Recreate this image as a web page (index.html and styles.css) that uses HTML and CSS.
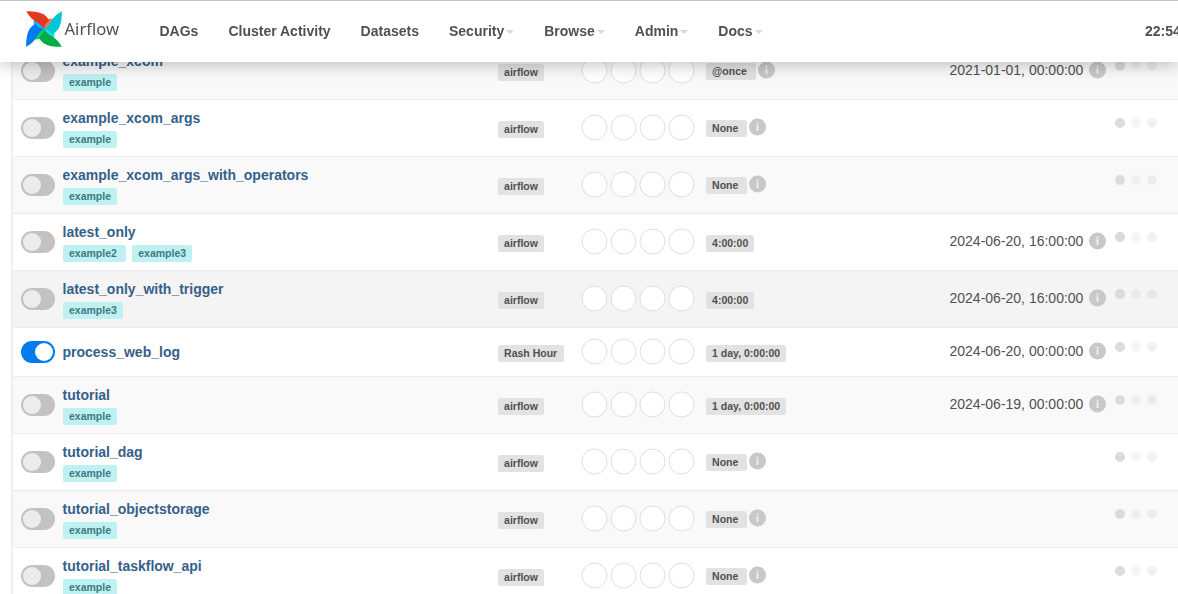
FILE: index.html
```html
<!DOCTYPE html>
<html lang="en">
<head>
<meta charset="utf-8">
<title>DAGs - Airflow</title>
<link rel="stylesheet" href="styles.css">
</head>
<body>
<header class="navbar">
  <a class="brand">
    <svg class="brand-mark" viewBox="0 0 36 36" width="36" height="36">
      <defs>
        <path id="blade" d="M18 18Q15 13 9.500 10.500Q4 7 0.300 0.200C6 0 13.500 0.800 18 3.600Q21.500 6 23.200 9.500Q19 12.500 18 18Z"/>
        <path id="fold" d="M18 18Q15 12 21 8L26.500 7.500Q25.500 13 21 18Z"/>
      </defs>
      <use href="#fold" fill="#ff7557"/>
      <use href="#fold" fill="#11e1ee" transform="rotate(90 18 18)"/>
      <use href="#fold" fill="#04d659" transform="rotate(180 18 18)"/>
      <use href="#fold" fill="#0cb6ff" transform="rotate(270 18 18)"/>
      <use href="#blade" fill="#e43921"/>
      <use href="#blade" fill="#00c7d4" transform="rotate(90 18 18)"/>
      <use href="#blade" fill="#00ad46" transform="rotate(180 18 18)"/>
      <use href="#blade" fill="#017cee" transform="rotate(270 18 18)"/>
    </svg>
    <span class="brand-name">Airflow</span>
  </a>
  <nav class="menu">
    <a>DAGs</a>
    <a>Cluster Activity</a>
    <a>Datasets</a>
    <a>Security<i class="caret"></i></a>
    <a>Browse<i class="caret"></i></a>
    <a>Admin<i class="caret"></i></a>
    <a>Docs<i class="caret"></i></a>
  </nav>
  <span class="clock">22:54</span>
</header>
<main class="dags" id="dags"></main>
<script src="dags.js"></script>
</body>
</html>
```
FILE: styles.css
```css
* { box-sizing: border-box; }
body {
  margin: 0;
  height: 594px;
  overflow: hidden;
  background: #fff;
  color: #51504f;
  font: 14px/20px "Liberation Sans", Arial, sans-serif;
}
.navbar {
  position: fixed;
  inset: 0 0 auto;
  z-index: 2;
  display: flex;
  align-items: center;
  height: 62px;
  padding-bottom: 2px;
  border-top: 1px solid #c4c4c4;
  background: #fff;
  box-shadow: 0 3px 16px rgba(0, 0, 0, 0.24);
}
.brand {
  display: flex;
  width: 133.500px;
  padding-left: 26px;
  padding-bottom: 4px;
}
.brand-mark { flex: none; }
.brand-name {
  padding: 7px 0 0 2.500px;
  font: 16.600px/22px "Noto Sans", sans-serif;
}
.menu {
  display: flex;
  flex: 1;
  gap: 30px;
  padding-left: 26px;
  font-weight: bold;
  white-space: nowrap;
}
.caret {
  display: inline-block;
  margin-left: 2px;
  vertical-align: 2px;
  border: 4px solid transparent;
  border-top-color: #e2d2e2;
  border-bottom: 0;
}
.clock {
  flex: none;
  width: 33px;
  font-weight: bold;
}
.dags {
  margin-left: 11px;
  padding-top: 42px;
  border-left: 2px solid #efefef;
}
.dag {
  display: grid;
  grid-template-columns: 49.500px 435.500px 83px 125px 243.500px 165.500px 1fr;
  align-items: center;
  height: 57px;
  border-top: 1px solid #ececec;
}
.dag.untagged { height: 49px; }
.dag:nth-child(odd) { background: #f9f9f9; }
.dag.untagged { background: #fff; }
.dag.hovered { background: #f4f4f4; }
.toggle {
  width: 34px;
  height: 22px;
  margin-left: 8px;
  padding: 2px;
  border-radius: 11px;
  background: #c4c2c1;
}
.toggle::before {
  content: "";
  display: block;
  width: 18px;
  height: 18px;
  border-radius: 50%;
  background: #edecec;
}
.toggle.on { background: #017cee; }
.toggle.on::before { margin-left: 12px; background: #fff; }
.name {
  display: block;
  color: #365f8b;
  font-weight: bold;
}
.tags {
  display: flex;
  gap: 6.300px;
  margin: 3px 0 0 0.400px;
}
.label {
  display: block;
  height: 17px;
  padding: 0 6.100px;
  border-radius: 2.600px;
  background: #e2e2e2;
  font-size: 10.500px;
  font-weight: bold;
  line-height: 17px;
  white-space: nowrap;
}
.tag { background: #bff0f2; color: #3a7c80; }
.owner { display: flex; padding-top: 3px; }
.untagged .owner .label { padding-right: 6.600px; }
.runs { display: block; margin-top: -1px; }
.schedule { display: flex; align-items: center; gap: 2px; padding-top: 3px; }
.schedule.with-info { padding-top: 0; }
.with-info .label { margin-top: 1px; }
.with-info .info { margin-top: -2px; }
.next-run {
  display: flex;
  align-items: center;
  gap: 5.500px;
  padding-bottom: 2px;
}
.info { flex: none; display: block; overflow: visible; }
.next-run .info { margin-top: 1px; }
.dots { display: flex; gap: 6px; margin-bottom: 10px; }
.dots i {
  width: 10px;
  height: 10px;
  border-radius: 50%;
  background: rgba(0, 0, 0, 0.050);
}
.dots i:first-child { background: #dbdbdb; }
.dots i:nth-child(2) { background: rgba(0, 0, 0, 0.040); }
```
FILE: dags.js
```js
const dags = [
  { name: 'example_xcom', tags: ['example'], schedule: '@once', info: true, next: '2021-01-01, 00:00:00' },
  { name: 'example_xcom_args', tags: ['example'], schedule: 'None', info: true },
  { name: 'example_xcom_args_with_operators', tags: ['example'], schedule: 'None', info: true },
  { name: 'latest_only', tags: ['example2', 'example3'], schedule: '4:00:00', next: '2024-06-20, 16:00:00' },
  { name: 'latest_only_with_trigger', tags: ['example3'], schedule: '4:00:00', next: '2024-06-20, 16:00:00', hovered: true },
  { name: 'process_web_log', tags: [], owner: 'Rash Hour', schedule: '1 day, 0:00:00', next: '2024-06-20, 00:00:00', on: true },
  { name: 'tutorial', tags: ['example'], schedule: '1 day, 0:00:00', next: '2024-06-19, 00:00:00' },
  { name: 'tutorial_dag', tags: ['example'], schedule: 'None', info: true },
  { name: 'tutorial_objectstorage', tags: ['example'], schedule: 'None', info: true },
  { name: 'tutorial_taskflow_api', tags: ['example'], schedule: 'None', info: true },
];

const info = `<svg class="info" width="17" height="17" viewBox="0 0.4 17 17">
  <circle cx="8.5" cy="8.500" r="8.500" fill="#c8c8c8"/>
  <path fill="#f1f1f1" d="M7.600 4.200h1.800v1.800h-1.800zM7.200 7h2.200v5.500h-1.800V8H7.200z"/></svg>`;

const runs = `<svg class="runs" width="116" height="27" viewBox="0 0 116 27">${
  [13.5, 42.5, 71.5, 100.5].map(x => `<circle cx="${x}" cy="13.5" r="12.500" fill="#fff" stroke="#dedede"/>`).join('')
}</svg>`;

document.getElementById('dags').innerHTML = dags.map(d => {
  // Every tag but the last keeps a trailing space inside its label.
  const tags = d.tags.map((t, i) =>
    `<span class="label tag">${t}${i < d.tags.length - 1 ? '&nbsp;' : ''}</span>`).join('');
  return `<section class="dag${d.tags.length ? '' : ' untagged'}${d.hovered ? ' hovered' : ''}">
    <span class="toggle${d.on ? ' on' : ''}"></span>
    <div><a class="name">${d.name}</a>${tags && `<div class="tags">${tags}</div>`}</div>
    <div class="owner"><span class="label">${d.owner || 'airflow'}</span></div>
    ${runs}
    <div class="schedule${d.info ? ' with-info' : ''}"><span class="label">${d.schedule}${d.info ? '&nbsp;' : ''}</span>${d.info ? info : ''}</div>
    <div class="next-run">${d.next ? `<span>${d.next}</span>${info}` : ''}</div>
    <div class="dots"><i></i><i></i><i></i></div>
  </section>`;
}).join('');
```
